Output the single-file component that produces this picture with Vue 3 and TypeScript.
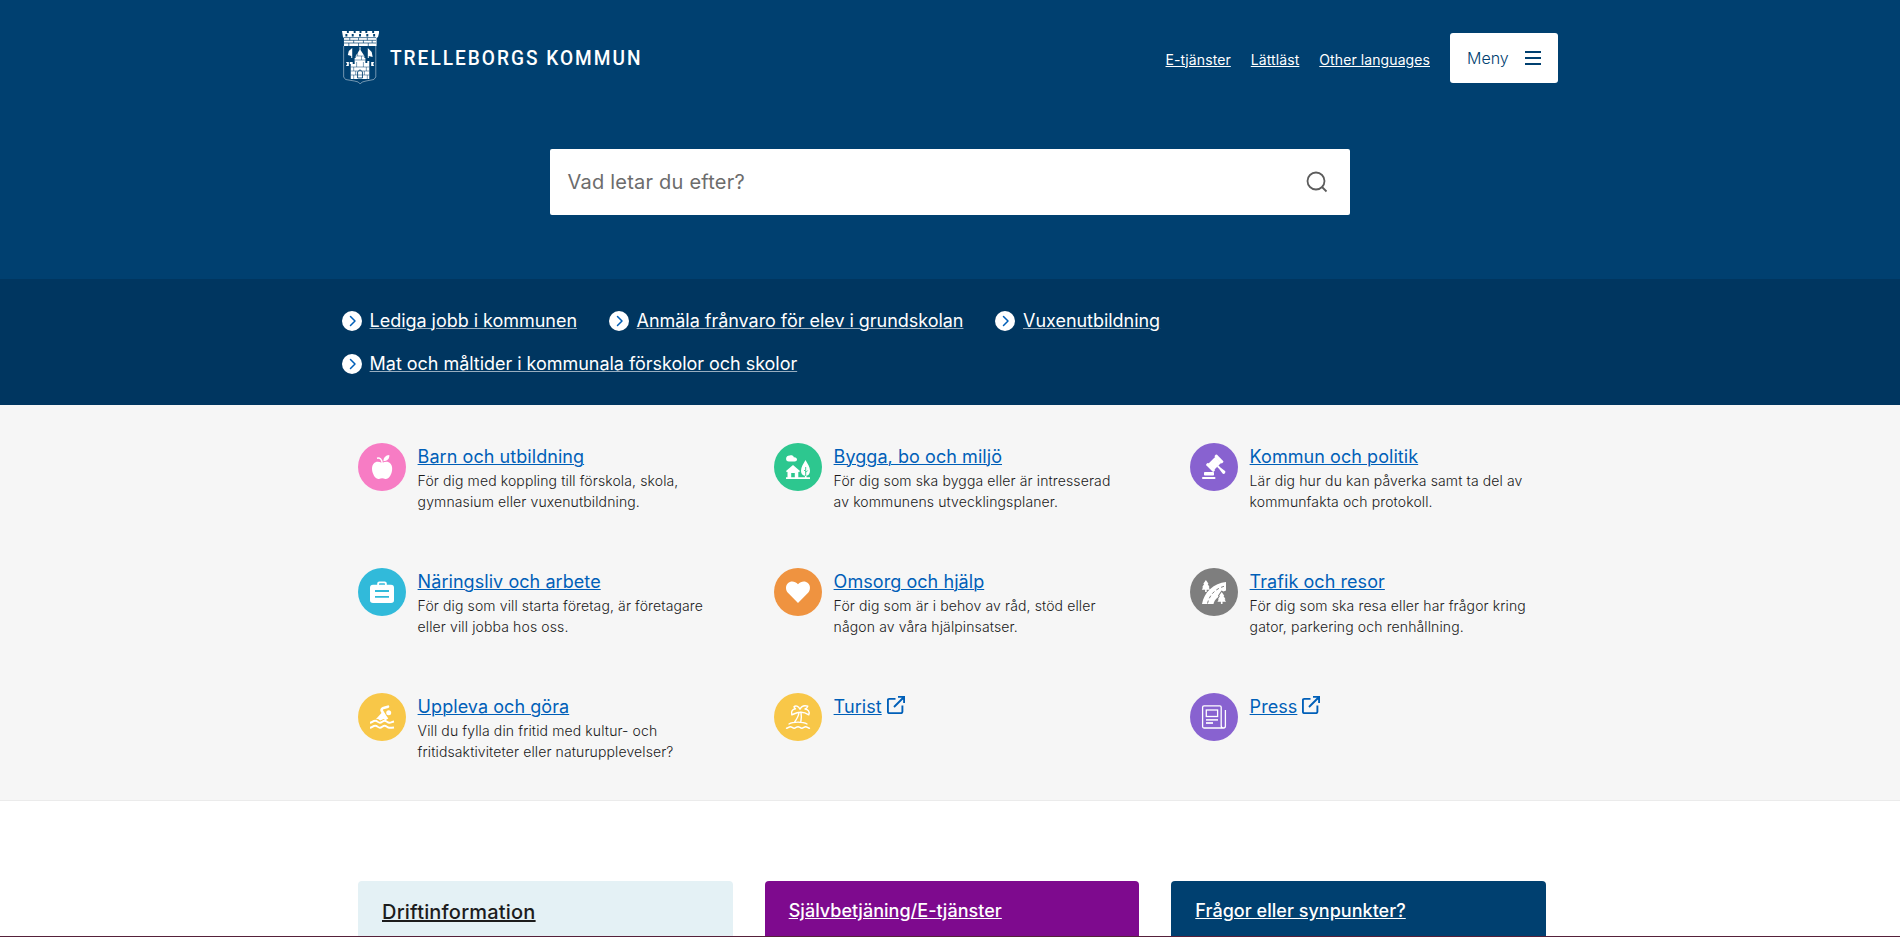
<script setup lang="ts">
interface Topic {
  title: string
  lines: string[]
  icon: string
  color: string
  external?: boolean
}

const topLinks: string[] = ['E-tjänster', 'Lättläst', 'Other languages']

const quickLinks: string[] = [
  'Lediga jobb i kommunen',
  'Anmäla frånvaro för elev i grundskolan',
  'Vuxenutbildning',
  'Mat och måltider i kommunala förskolor och skolor',
]

const topics: Topic[] = [
  { title: 'Barn och utbildning', lines: ['För dig med koppling till förskola, skola,', 'gymnasium eller vuxenutbildning.'], icon: 'apple', color: '#f77cc4' },
  { title: 'Bygga, bo och miljö', lines: ['För dig som ska bygga eller är intresserad', 'av kommunens utvecklingsplaner.'], icon: 'house', color: '#2dc78f' },
  { title: 'Kommun och politik', lines: ['Lär dig hur du kan påverka samt ta del av', 'kommunfakta och protokoll.'], icon: 'gavel', color: '#8862d0' },
  { title: 'Näringsliv och arbete', lines: ['För dig som vill starta företag, är företagare', 'eller vill jobba hos oss.'], icon: 'case', color: '#31bada' },
  { title: 'Omsorg och hjälp', lines: ['För dig som är i behov av råd, stöd eller', 'någon av våra hjälpinsatser.'], icon: 'heart', color: '#ef9340' },
  { title: 'Trafik och resor', lines: ['För dig som ska resa eller har frågor kring', 'gator, parkering och renhållning.'], icon: 'road', color: '#7e7e7e' },
  { title: 'Uppleva och göra', lines: ['Vill du fylla din fritid med kultur- och', 'fritidsaktiviteter eller naturupplevelser?'], icon: 'swim', color: '#f8c748' },
  { title: 'Turist', lines: [], icon: 'palm', color: '#f8c748', external: true },
  { title: 'Press', lines: [], icon: 'news', color: '#8862d0', external: true },
]
</script>

<template>
  <div class="page">
    <header class="hero">
      <div class="container topbar">
        <a class="brand">
          <svg class="crest" width="37" height="55" viewBox="0 0 38 55" preserveAspectRatio="none">
            <path fill="#fff" d="M0 0h5v2h2V0h5v2h2V0h4v2h2V0h4v2h2V0h5v2h2V0h5v2l-1 4-1.500 1v8H2V7L1 6z" />
            <g stroke="#004070" fill="none" stroke-width=".7">
              <path d="M2 6.600h33M2 9.300h33M2 12h33M8 6.600v2.700M17 6.600v2.700M26 6.600v2.700M12 9.300V12M22 9.300V12M31 9.300V12M7 12v3M17 12v3M27 12v3" />
            </g>
            <path fill="#004070" d="M3.500 3h2v2.500h-2zM10 3h2v2.500h-2zM17.500 3h2v2.500h-2zM25 3h2v2.500h-2zM32 3h2v2.500h-2z" />
            <path fill="none" stroke="#fff" stroke-width=".7" opacity=".65" d="M1.700 15v31l2 2.500 9 1.500 4 1 2 2 2-2 4-1 8-1.500 2-2.500V15" />
            <path fill="#fff" d="M18 16h1v3l4 6v2h1v5h2v-2h2v18H9V33H8v-2h3v2h2v-6h1v-2l4-6z" />
            <path fill="#fff" d="M10.500 17v10h-1v-2l-3.500-1 1-4zM26.500 17v10h1v-2l4 1-1-5zM4 31h3v4H4l1.500-2zM30 31h3l-1 2 1 2h-3z" />
            <path fill="none" stroke="#004070" stroke-width=".5" d="M14 25h9M13 29h11M9 36h19M9 40h19M9 44h19M16 21v4M20 25v4M15 31v5M22 31v5M12 36v4M25 36v4M14 40v4M23 40v4M12 44v4M26 44v4" />
            <path fill="none" stroke="#004070" stroke-width=".9" d="M16 47v-6q2.500-4 5 0v6z" />
          </svg>
          <span class="wordmark">TRELLEBORGS KOMMUN</span>
        </a>
        <nav class="toplinks">
          <a v-for="l in topLinks" :key="l">{{ l }}</a>
          <button class="menu" type="button">
            <span>Meny</span>
            <svg width="16" height="14" viewBox="0 0 16 14"><path fill="#004070" d="M0 0h16v2H0zM0 6h16v2H0zM0 12h16v2H0z" /></svg>
          </button>
        </nav>
      </div>
      <div class="search">
        <span>Vad letar du efter?</span>
        <svg width="22" height="22" viewBox="0 0 22 22" fill="none" stroke="#5c5c5c" stroke-width="1.800"><circle cx="10" cy="10" r="8.500" /><path d="M16 16l4.500 4.500" /></svg>
      </div>
    </header>

    <section class="quick">
      <ul class="container quicklist">
        <li v-for="q in quickLinks" :key="q">
          <svg width="20" height="20" viewBox="0 0 20 20"><circle cx="10" cy="10" r="10" fill="#fff" /><path d="M8.500 5.500L13 10l-4.500 4.500" fill="none" stroke="#005fb8" stroke-width="1.500" stroke-linecap="round" stroke-linejoin="round" /></svg>
          <a>{{ q }}</a>
        </li>
      </ul>
    </section>

    <section class="topics">
      <div class="container grid">
        <article v-for="t in topics" :key="t.title" class="topic">
          <span class="badge" :style="{ backgroundColor: t.color }">
            <svg width="24" height="24" viewBox="0 0 24 24" fill="#fff">
              <template v-if="t.icon === 'apple'">
                <path d="M12 8C9.500 6.700 7.500 6.300 5.500 7.200 1.500 9 1.400 14.500 3 18.500c1.500 4 3.500 5.800 6 5.400 1.200-.2 2-.6 3.100-.6s2 .4 3.200.6c2.600.4 4.600-1.500 6-5.400 1.600-4.200 1.300-9.500-2.700-11.300-2-.9-4-.5-6.600.8z" />
                <path d="M13.400 6.200C13.400 3 15.500.3 19.300.100c.4 3.900-2.300 6.100-5.900 6.100z" />
                <path d="M7 3.200c3-.6 5 1 5.200 5" fill="none" stroke="#fff" stroke-width="1.500" />
              </template>
              <template v-else-if="t.icon === 'house'">
                <path d="M0 22.200h24V24H0zM3 6.500C.8 6.500 0 5 .1 3.400.2 1.500 2 .300 3.800.500 5.300 0 7.500.500 7.800 2.200c2-.2 3.200.800 3.200 2.300 0 1.300-1 2-2.300 2z" />
                <path fill-rule="evenodd" d="M7 10l7 6-1 1.200-.7-.5V23H8.800v-5H5.200v5H1.500v-6.300l-.6.500L0 16z" />
                <path d="M19.500 5c2 3.500 4.500 7 4.500 10.500 0 3-1.500 5-3.500 5.300V23h-1.600v-2.200c-2.500-.3-3.900-2.300-3.900-5C15 12 17.500 8.500 19.500 5z" />
                <path d="M19.700 12v9M19.700 17.500l2-2M19.500 16.500l-1.500-1.500" fill="none" stroke="#2dc78f" stroke-width=".9" />
              </template>
              <template v-else-if="t.icon === 'gavel'">
                <rect x="2" y="17" width="10" height="3.600" rx=".8" />
                <rect x="0" y="22" width="13.500" height="2" rx=".9" />
                <g transform="translate(12.800 8.200) rotate(45)">
                  <rect x="-5.300" y="-7.500" width="10.600" height="3" rx="1" />
                  <rect x="-4.200" y="-5" width="8.400" height="10" />
                  <rect x="-5.300" y="4.500" width="10.600" height="3" rx="1" />
                  <path d="M4 -1h3l5.800-.7a1.500 1.500 0 011.400 1.500v.5A1.500 1.500 0 0112.800 1.800L7 1H4z" />
                </g>
              </template>
              <template v-else-if="t.icon === 'case'">
                <path fill-rule="evenodd" d="M3 4.700h4.200V3.600Q7.200 1.500 9.300 1.500h5.400q2.100 0 2.100 2.100v1.100H21q3 0 3 3v12.600q0 2.700-3 2.700H3q-3 0-3-2.700V7.700q0-3 3-3zM9 4.700h6v-.6q0-.8-.8-.8H9.800q-.8 0-.8.8zM5 10.100v1.800h14v-1.800zM5 16v1.800h14V16z" />
              </template>
              <path v-else-if="t.icon === 'heart'" d="M12 23L1.900 12.800C-.6 10-.6 5.500 1.900 3.200 4.700.600 9 .900 12 4.300 15 .900 19.300.600 22.100 3.200c2.500 2.300 2.500 6.800 0 9.600z" />
              <template v-else-if="t.icon === 'road'">
                <path d="M0 24C2 12 12 3 24 2v8.500l-2.500 1-2-1-3.500 5 .5 1.300C13 19.500 12 21.500 11.500 24z" />
                <path d="M3.900 0l2.600 3.800-.8.200 1.900 3.200-.8.300 1.200 2.300H4.700V12H3.100V9.800H-.2L1 7.500l-.8-.3L2.100 4l-.8-.2z" />
                <path d="M19.700 12l2.600 3.800-.8.200 2 3.200-.9.300 1.400 2.300h-3.500V24h-1.600v-2.200h-3.500l1.400-2.300-.9-.3 2-3.200-.8-.2z" stroke="#7e7e7e" stroke-width=".9" paint-order="stroke" />
                <path d="M5.500 23.500C7.500 14.500 14 8 24 5.800" fill="none" stroke="#7e7e7e" stroke-width="1" stroke-dasharray="3 2.500" />
              </template>
              <template v-else-if="t.icon === 'swim'">
                <circle cx="18.700" cy="7.800" r="2.500" />
                <path d="M18 1.700L13.500 2.900Q11.300 3.800 11.600 5.500L14 9.500" fill="none" stroke="#fff" stroke-width="2.600" stroke-linecap="round" stroke-linejoin="round" />
                <path d="M11.500 8L14.800 8.500 18.300 13.500 15.500 15.300 13.500 14 10.300 15.500 8 14 5.800 14.200z" />
                <g fill="none" stroke="#fff" stroke-width="1.900">
                  <path d="M0 17.800c2 0 2.700-2 5.200-2s2.700 2 4.700 2 2.700-2 4.700-2 2.700 2 4.700 2 2.700-1 4.700-1.300" />
                  <path d="M0 22.800c2 0 2.700-2 5.200-2s2.700 2 4.700 2 2.700-2 4.700-2 2.700 2 4.700 2 2.700 0 4.700-.3" />
                </g>
              </template>
              <g v-else-if="t.icon === 'palm'" fill="none" stroke="#fff" stroke-width="1.400" stroke-linejoin="round" stroke-linecap="round">
                <path d="M14 4.200C12.500 1 9.500.200 8 1.800 8.500 3 9 3.500 9.500 3.800 6.500 4 4.800 6.500 5.800 9.800 8.500 8.800 10.500 7.500 14 7.300 17.500 7 20.500 8.300 22.800 9.800 24 7 22.200 4.300 19 4c1.500-.5 2.500-1.500 2.800-2.800C18.500.200 15.500 1 14 4.200z" />
                <path d="M13 7.500c-.5 4-2.500 7-4.500 9.700M15 7.500c.7 3.500.3 6.500-.2 9.500M3 19c4-2.500 14-2.500 18 0" />
                <path d="M.5 23.200c1.700 0 2.300-1.500 3.800-1.500s2.300 1.500 3.850 1.500 2.300-1.500 3.850-1.500 2.300 1.500 3.850 1.500 2.300-1.500 3.850-1.500 2.100 1.500 3.800 1.500" />
              </g>
              <g v-else fill="none" stroke="#fff" stroke-width="1.300">
                <path d="M19.200 21V2.300Q19.200.900 17.800.900H2Q.6.900.6 2.300v19.200Q.6 23 2 23h19.500q1.900 0 1.900-2V5M19.200 20.500q0 2.500 2.300 2.500" />
                <rect x="4.300" y="5" width="11.300" height="6.500" />
                <path d="M4 14.800h12M4 18h7" stroke-width="1.800" opacity=".85" />
              </g>
            </svg>
          </span>
          <div class="copy">
            <div class="head">
              <a>{{ t.title }}</a>
              <svg v-if="t.external" width="18" height="18" viewBox="0 0 18 18" fill="none" stroke="#005fb8" stroke-width="1.900"><path d="M8.500 2.900H2.300Q.9 2.900.9 4.300v11.400q0 1.400 1.400 1.400H14q1.400 0 1.400-1.400V9.500M11 .9h6.100V7M17 1L7 11" /></svg>
            </div>
            <p v-if="t.lines.length">{{ t.lines[0] }}<br />{{ t.lines[1] }}</p>
          </div>
        </article>
      </div>
    </section>

    <section class="cards">
      <a class="card info"><span>Driftinformation</span></a>
      <a class="card service"><span>Självbetjäning/E-tjänster</span></a>
      <a class="card contact"><span>Frågor eller synpunkter?</span></a>
    </section>
    <div class="edge"></div>
  </div>
</template>

<style>
body {
  margin: 0;
  overflow: hidden;
}
</style>

<style scoped>
.page {
  position: relative;
  height: 937px;
  overflow: hidden;
  background: #fff;
  font-family: Inter, 'Liberation Sans', sans-serif;
  color: #1a1a1a;
}
.container {
  width: 1216px;
  margin: 0 auto;
}
.hero {
  height: 279px;
  background: #004070;
}
.topbar {
  display: flex;
  justify-content: space-between;
  height: 149px;
}
.brand {
  display: flex;
  align-items: flex-start;
  padding-top: 31px;
}
.wordmark {
  margin: 15px 0 0 11px;
  font: 500 21px/25px Roboto, sans-serif;
  letter-spacing: 2.200px;
  color: #fff;
  white-space: nowrap;
  transform: scaleX(0.908);
  transform-origin: left;
}
.toplinks {
  display: flex;
  align-items: center;
  height: 50px;
  padding-top: 33px;
  gap: 20px;
}
.toplinks a {
  padding-top: 3px;
  font-size: 14px;
  line-height: 20px;
  letter-spacing: 0.090px;
  color: #fff;
  text-decoration: underline;
}
.menu {
  display: flex;
  align-items: center;
  justify-content: space-between;
  width: 108px;
  height: 50px;
  padding: 0 17px;
  border: 0;
  border-radius: 3px;
  background: #fff;
  font: 300 16px/24px Inter, sans-serif;
  color: #004070;
}
.search {
  display: flex;
  align-items: center;
  justify-content: space-between;
  box-sizing: border-box;
  width: 800px;
  height: 66px;
  margin: 0 auto;
  padding: 0 22px 0 17.500px;
  border-radius: 2px;
  background: #fff;
  font-size: 20px;
  font-weight: 370;
  letter-spacing: 0.220px;
  color: #6c6c6c;
}
.quick {
  height: 126px;
  background: #003660;
}
.quicklist {
  display: flex;
  flex-wrap: wrap;
  gap: 13px 32px;
  box-sizing: border-box;
  padding: 27px 0 0;
  list-style: none;
}
.quicklist li {
  display: flex;
  align-items: center;
  gap: 7.600px;
  height: 30px;
}
.quicklist a {
  font-size: 18px;
  line-height: 30px;
  letter-spacing: -0.035px;
  color: #fff;
  text-decoration: underline 1px rgba(255, 255, 255, 0.6);
}
.topics {
  height: 395px;
  border-bottom: 1px solid #ebebeb;
  background: #f6f6f6;
}
.grid {
  display: grid;
  grid-template-columns: repeat(3, 384px);
  grid-auto-rows: 125px;
  column-gap: 32px;
  box-sizing: border-box;
  padding: 38px 0 0 16px;
}
.topic {
  display: flex;
  gap: 11.600px;
}
.badge {
  display: flex;
  flex: none;
  align-items: center;
  justify-content: center;
  width: 48px;
  height: 48px;
  border-radius: 50%;
}
.badge svg {
  overflow: visible;
}
.head {
  display: flex;
  gap: 5px;
  font-size: 18px;
  line-height: 27px;
  letter-spacing: 0.060px;
}
.head a {
  color: #005fb8;
  text-decoration: underline 1px;
}
.head svg {
  margin-top: 3px;
}
.copy p {
  margin: 0;
  font-size: 14px;
  font-weight: 350;
  line-height: 21px;
  letter-spacing: 0.120px;
  white-space: nowrap;
}
.cards {
  display: grid;
  grid-template-columns: repeat(3, 374.660px);
  column-gap: 32px;
  width: 1184px;
  margin: 80px auto 0;
}
.card {
  box-sizing: border-box;
  height: 120px;
  padding: 16px 24px;
  border-radius: 4px;
  font-size: 18px;
  font-weight: 500;
  line-height: 27px;
  letter-spacing: 0.030px;
  color: #fff;
  text-decoration: underline;
}
.info {
  background: #e4f1f5;
  font-size: 20px;
  line-height: 30px;
  letter-spacing: 0.200px;
  color: #1c1c1c;
}
.service {
  background: #7e0a8e;
}
.contact {
  background: #004070;
}
.edge {
  position: absolute;
  right: 0;
  bottom: 0;
  left: 0;
  height: 1px;
  background: #55213a;
}
</style>
